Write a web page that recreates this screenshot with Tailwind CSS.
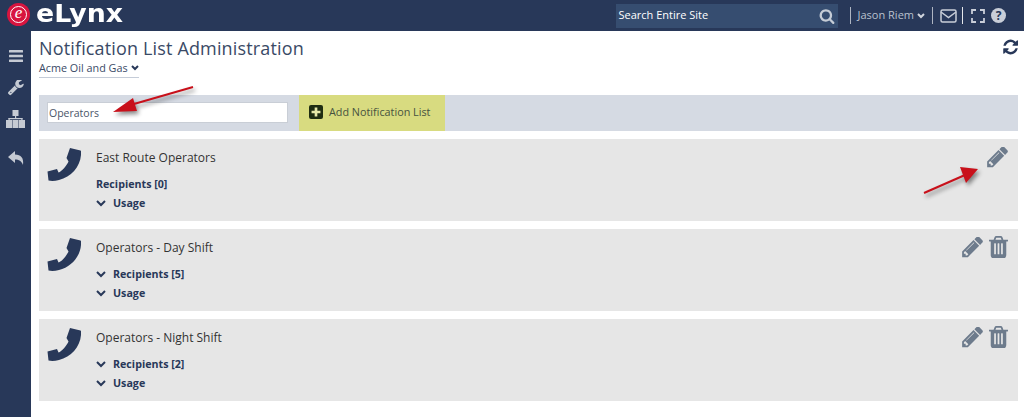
<!DOCTYPE html>
<html lang="en">
<head>
  <meta charset="UTF-8" />
  <title>Notification List Administration</title>
  <script src="https://cdn.jsdelivr.net/npm/@tailwindcss/browser@4"></script>
</head>
<body class="bg-white font-['Open_Sans',sans-serif] overflow-hidden">
  <div class="relative w-[1024px] h-[417px] overflow-hidden">

    <!-- Top bar -->
    <header class="h-[31px] bg-[#283859] flex items-center">
      <div class="ml-[7px] w-[23px] h-[23px] -mt-[3px] rounded-full bg-[#d8143f] flex items-center justify-center">
        <div class="w-[17px] h-[17px] rounded-full border border-white flex items-center justify-center text-white font-['Liberation_Serif',serif] italic text-[17px] leading-none pb-[3px]">e</div>
      </div>
      <div class="ml-[6px] -mt-[5px] text-white font-['DejaVu_Sans',sans-serif] font-bold text-[25px] leading-none origin-left scale-x-[1.07]">eLynx</div>

      <div class="ml-auto flex items-center">
        <div class="w-[222px] h-[24px] bg-[#364d70] flex items-center justify-between pl-[3px] pr-[3px] mr-[12px]">
          <span class="text-white text-[11px]">Search Entire Site</span>
          <svg class="w-[16px] h-[16px] fill-[#c5ccd6]" viewBox="0 0 1792 1792"><path d="M1216 832q0-185-131.500-316.500t-316.500-131.500-316.500 131.500-131.500 316.500 131.500 316.500 316.500 131.500 316.500-131.500 131.500-316.500zm512 832q0 52-38 90t-90 38q-54 0-90-38l-343-342q-179 124-399 124-143 0-273.500-55.500t-225-150-150-225-55.500-273.500 55.500-273.500 150-225 225-150 273.500-55.500 273.500 55.500 225 150 150 225 55.500 273.500q0 220-124 399l343 343q37 37 37 90z"/></svg>
        </div>
        <div class="w-px h-[17px] bg-[#aeb5c2]"></div>
        <span class="ml-[7px] text-[#b9c1ce] text-[11px]">Jason Riem</span>
        <svg class="ml-[3px] w-[8px] h-[6px] stroke-[#d0d5dd] fill-none stroke-2" viewBox="0 0 8 6"><path d="M1 1l3 3 3-3"/></svg>
        <div class="ml-[7px] w-px h-[17px] bg-[#aeb5c2]"></div>
        <svg class="ml-[7px] w-[17px] h-[14px] stroke-[#c9ced8] fill-none stroke-[1.5]" viewBox="0 0 17 14"><rect x="1" y="1" width="15" height="12" rx="1.500"/><path d="M1 3l7.500 5.500L16 3"/></svg>
        <div class="ml-[5px] w-px h-[17px] bg-[#e5e7eb]"></div>
        <svg class="ml-[8px] w-[14px] h-[14px] stroke-[#c9ced8] fill-none stroke-[1.8]" viewBox="0 0 14 14"><path d="M1 5V1h4M9 1h4v4M13 9v4H9M5 13H1V9"/></svg>
        <div class="ml-[6px] mr-[18px] w-[15px] h-[15px] rounded-full bg-[#c9ced8] flex items-center justify-center text-[#283859] text-[12px] font-bold leading-none">?</div>
      </div>
    </header>

    <div class="flex h-[386px]">
      <!-- Side nav -->
      <nav class="w-[31px] bg-[#283859] flex flex-col items-center pt-[19px]">
        <svg class="w-[14px] h-[12px] fill-[#c5cad3] shrink-0" viewBox="0 0 14 12"><rect width="14" height="2.600" rx=".5"/><rect y="4.700" width="14" height="2.600" rx=".5"/><rect y="9.400" width="14" height="2.600" rx=".5"/></svg>
        <svg class="w-[16px] h-[16px] mt-[18px] fill-[#c5cad3] shrink-0" viewBox="0 0 1664 1664"><path d="M363 1280q0-26-19-45t-45-19-45 19-19 45 19 45 45 19 45-19 19-45zm644-420l-682 682q-37 37-90 37-52 0-91-37l-106-108q-38-36-38-90 0-53 38-91l681-681q39 98 114.500 173.500t173.500 114.500zm634-435q0 39-23 106-47 134-164.500 217.500t-258.500 83.500q-185 0-316.500-131.500t-131.500-316.500 131.500-316.500 316.500-131.500q58 0 121.500 16.500t107.500 46.500q16 11 16 28t-16 28l-293 169v224l193 107q5-3 79-48.500t135.500-81 70.500-35.500q15 0 23.500 10t8.500 25z"/></svg>
        <svg class="w-[19px] h-[18px] mt-[14px] fill-[#c5cad3] shrink-0" viewBox="0 0 19 18"><rect x="6.500" y="0" width="6" height="6"/><rect x="9" y="6" width="1.200" height="2.500"/><rect x="2.500" y="8" width="14" height="1.200"/><rect x="2.500" y="8" width="1.200" height="2.500"/><rect x="15.300" y="8" width="1.200" height="2.500"/><rect x="0" y="10" width="6" height="8"/><rect x="6.500" y="10" width="6" height="8"/><rect x="13" y="10" width="6" height="8"/></svg>
        <svg class="w-[16px] h-[14px] mt-[23px] fill-[#c5cad3] shrink-0" viewBox="0 0 16 14"><path d="M0 6L7 0v3.500C13 3.500 16 7 15 14 13.500 10 11 8.500 7 8.500V12z"/></svg>
      </nav>

      <!-- Main -->
      <main class="flex-1 pl-[8px] pr-[6px]">
        <div class="flex justify-between h-[64px]">
          <div class="pt-[6px]">
            <h1 class="text-[#3a4a66] text-[18px] leading-[22px] tracking-[0.15px]">Notification List Administration</h1>
            <div class="mt-[1px] flex w-fit items-center border-b border-[#c5ccd8] text-[#3a4a66] text-[10.800px] leading-[16px] pb-[1px]">
              Acme Oil and Gas
              <svg class="ml-[3px] w-[8px] h-[6px] stroke-[#283859] fill-none stroke-2" viewBox="0 0 8 6"><path d="M1 1l3 3 3-3"/></svg>
            </div>
          </div>
          <svg class="w-[16px] h-[16px] mt-[8px] fill-[#283859]" viewBox="0 128 1664 1536"><path d="M1639 1056q0 5-1 7-64 268-268 434.500t-478 166.500q-146 0-282.500-55t-243.500-157l-129 129q-19 19-45 19t-45-19-19-45v-448q0-26 19-45t45-19h448q26 0 45 19t19 45-19 45l-137 137q71 66 161 102t187 36q134 0 250-65t186-179q11-17 53-117 8-23 30-23h192q13 0 22.500 9.500t9.500 22.500zm25-800v448q0 26-19 45t-45 19h-448q-26 0-45-19t-19-45 19-45l138-138q-148-137-349-137-134 0-250 65t-186 179q-11 17-53 117-8 23-30 23h-199q-13 0-22.500-9.500t-9.500-22.500v-7q65-268 270-434.500t480-166.500q146 0 284 55.500t245 156.500l130-129q19-19 45-19t45 19 19 45z"/></svg>
        </div>

        <!-- Toolbar -->
        <div class="h-[36px] bg-[#d5dae3] flex items-center pl-[8px] mb-[8px]">
          <input value="Operators" class="w-[241px] h-[21px] -mt-[1px] bg-white border border-[#c9ced6] px-[1px] text-[10.500px] text-[#4a5568] outline-none" />
          <div class="ml-[11px] w-[146px] h-[36px] bg-[#d8db80] flex items-center pl-[10px] pb-[2px] text-[#46523f] text-[10.800px]">
            <div class="w-[14px] h-[14px] rounded-[2px] bg-[#1f2d12] flex items-center justify-center mr-[6px]">
              <svg class="w-[10px] h-[10px] fill-[#e6e8a8]" viewBox="0 0 9 9"><path d="M3.300 0.500h2.400v2.800h2.800v2.400H5.700v2.800H3.300V5.700H.5V3.300h2.800z"/></svg>
            </div>
            Add Notification List
          </div>
        </div>

        <!-- Lists -->
        <div class="flex flex-col gap-[8px]">
          <section class="relative h-[82px] bg-[#e6e6e6] flex pl-[8px]">
            <svg class="w-[34px] h-[34px] mt-[8px] fill-[#283859] shrink-0" viewBox="0 0 34 34"><path d="M23 1l10.500 2.500Q34.500 4 34 8C33 20 24 30 12 33Q6 34.500 1.500 33.500L.5 24.500 10 22l1.500 3.500C15 24.500 20 18 21.500 14.500L19.500 11z"/></svg>
            <div class="ml-[15px] pt-[10px] text-[#283859]">
              <div class="text-[#333] text-[12px] leading-[18px]">East Route Operators</div>
              <div class="mt-[8px] text-[10.700px] font-bold leading-[18px]">Recipients [0]</div>
              <div class="mt-[1px] flex items-center text-[10.700px] font-bold leading-[18px]">
                <svg class="w-[10px] h-[7px] mr-[7px] stroke-[#283859] fill-none stroke-2" viewBox="0 0 10 7"><path d="M1 1l4 4 4-4"/></svg>Usage
              </div>
            </div>
            <div class="absolute right-[10px] top-[8px] flex">
              <svg class="w-[21px] h-[21px] fill-[#6d7b8c]" viewBox="0 0 1515 1536"><path d="M363 1344l91-91-235-235-91 91v107h128v128h107zm523-928q0-22-22-22-10 0-17 7l-542 542q-7 7-7 17 0 22 22 22 10 0 17-7l542-542q7-7 7-17zm-54-192l416 416-832 832h-416v-416zm683 96q0 53-37 90l-166 166-416-416 166-165q36-38 90-38 53 0 91 38l235 234q37 39 37 91z"/></svg>
            </div>
          </section>

          <section class="relative h-[82px] bg-[#e6e6e6] flex pl-[8px]">
            <svg class="w-[34px] h-[34px] mt-[8px] fill-[#283859] shrink-0" viewBox="0 0 34 34"><path d="M23 1l10.500 2.500Q34.500 4 34 8C33 20 24 30 12 33Q6 34.500 1.500 33.500L.5 24.500 10 22l1.500 3.500C15 24.500 20 18 21.500 14.500L19.500 11z"/></svg>
            <div class="ml-[15px] pt-[10px] text-[#283859]">
              <div class="text-[#333] text-[12px] leading-[18px]">Operators - Day Shift</div>
              <div class="mt-[8px] flex items-center text-[10.700px] font-bold leading-[18px]">
                <svg class="w-[10px] h-[7px] mr-[7px] stroke-[#283859] fill-none stroke-2" viewBox="0 0 10 7"><path d="M1 1l4 4 4-4"/></svg>Recipients [5]
              </div>
              <div class="mt-[1px] flex items-center text-[10.700px] font-bold leading-[18px]">
                <svg class="w-[10px] h-[7px] mr-[7px] stroke-[#283859] fill-none stroke-2" viewBox="0 0 10 7"><path d="M1 1l4 4 4-4"/></svg>Usage
              </div>
            </div>
            <div class="absolute right-[10px] top-[7px] flex items-center gap-[6px]">
              <svg class="w-[21px] h-[21px] fill-[#6d7b8c]" viewBox="0 0 1515 1536"><path d="M363 1344l91-91-235-235-91 91v107h128v128h107zm523-928q0-22-22-22-10 0-17 7l-542 542q-7 7-7 17 0 22 22 22 10 0 17-7l542-542q7-7 7-17zm-54-192l416 416-832 832h-416v-416zm683 96q0 53-37 90l-166 166-416-416 166-165q36-38 90-38 53 0 91 38l235 234q37 39 37 91z"/></svg>
              <svg class="w-[19px] h-[22px] fill-[#6d7b8c]" viewBox="0 0 1408 1536" preserveAspectRatio="none"><path d="M512 1248v-704q0-14-9-23t-23-9h-64q-14 0-23 9t-9 23v704q0 14 9 23t23 9h64q14 0 23-9t9-23zm256 0v-704q0-14-9-23t-23-9h-64q-14 0-23 9t-9 23v704q0 14 9 23t23 9h64q14 0 23-9t9-23zm256 0v-704q0-14-9-23t-23-9h-64q-14 0-23 9t-9 23v704q0 14 9 23t23 9h64q14 0 23-9t9-23zm-544-992h448l-48-117q-7-9-17-11h-317q-10 2-17 11zm928 32v64q0 14-9 23t-23 9h-96v948q0 83-47 143.500t-113 60.500h-832q-66 0-113-58.500t-47-141.500v-952h-96q-14 0-23-9t-9-23v-64q0-14 9-23t23-9h309l70-167q15-37 54-63t79-26h320q40 0 79 26t54 63l70 167h309q14 0 23 9t9 23z"/></svg>
            </div>
          </section>

          <section class="relative h-[82px] bg-[#e6e6e6] flex pl-[8px]">
            <svg class="w-[34px] h-[34px] mt-[8px] fill-[#283859] shrink-0" viewBox="0 0 34 34"><path d="M23 1l10.500 2.500Q34.500 4 34 8C33 20 24 30 12 33Q6 34.500 1.500 33.500L.5 24.500 10 22l1.500 3.500C15 24.500 20 18 21.500 14.500L19.500 11z"/></svg>
            <div class="ml-[15px] pt-[10px] text-[#283859]">
              <div class="text-[#333] text-[12px] leading-[18px]">Operators - Night Shift</div>
              <div class="mt-[8px] flex items-center text-[10.700px] font-bold leading-[18px]">
                <svg class="w-[10px] h-[7px] mr-[7px] stroke-[#283859] fill-none stroke-2" viewBox="0 0 10 7"><path d="M1 1l4 4 4-4"/></svg>Recipients [2]
              </div>
              <div class="mt-[1px] flex items-center text-[10.700px] font-bold leading-[18px]">
                <svg class="w-[10px] h-[7px] mr-[7px] stroke-[#283859] fill-none stroke-2" viewBox="0 0 10 7"><path d="M1 1l4 4 4-4"/></svg>Usage
              </div>
            </div>
            <div class="absolute right-[10px] top-[7px] flex items-center gap-[6px]">
              <svg class="w-[21px] h-[21px] fill-[#6d7b8c]" viewBox="0 0 1515 1536"><path d="M363 1344l91-91-235-235-91 91v107h128v128h107zm523-928q0-22-22-22-10 0-17 7l-542 542q-7 7-7 17 0 22 22 22 10 0 17-7l542-542q7-7 7-17zm-54-192l416 416-832 832h-416v-416zm683 96q0 53-37 90l-166 166-416-416 166-165q36-38 90-38 53 0 91 38l235 234q37 39 37 91z"/></svg>
              <svg class="w-[19px] h-[22px] fill-[#6d7b8c]" viewBox="0 0 1408 1536" preserveAspectRatio="none"><path d="M512 1248v-704q0-14-9-23t-23-9h-64q-14 0-23 9t-9 23v704q0 14 9 23t23 9h64q14 0 23-9t9-23zm256 0v-704q0-14-9-23t-23-9h-64q-14 0-23 9t-9 23v704q0 14 9 23t23 9h64q14 0 23-9t9-23zm256 0v-704q0-14-9-23t-23-9h-64q-14 0-23 9t-9 23v704q0 14 9 23t23 9h64q14 0 23-9t9-23zm-544-992h448l-48-117q-7-9-17-11h-317q-10 2-17 11zm928 32v64q0 14-9 23t-23 9h-96v948q0 83-47 143.500t-113 60.500h-832q-66 0-113-58.500t-47-141.500v-952h-96q-14 0-23-9t-9-23v-64q0-14 9-23t23-9h309l70-167q15-37 54-63t79-26h320q40 0 79 26t54 63l70 167h309q14 0 23 9t9 23z"/></svg>
            </div>
          </section>
        </div>
      </main>
    </div>

    <!-- Annotation arrows -->
    <svg class="absolute left-[105px] top-[80px] w-[100px] h-[45px] drop-shadow-[2px_3px_2px_rgba(0,0,0,0.45)]" viewBox="0 0 100 45"><path d="M88 7L22 26" stroke="#c8101a" stroke-width="2" fill="none"/><path d="M8 32l20-14 4 13z" fill="#c8101a"/></svg>
    <svg class="absolute left-[915px] top-[160px] w-[70px] h-[40px] drop-shadow-[2px_3px_2px_rgba(0,0,0,0.45)]" viewBox="0 0 70 40"><path d="M9 33L50 15" stroke="#c8101a" stroke-width="2" fill="none"/><path d="M63 9L45 7l6 16z" fill="#c8101a"/></svg>
  </div>
</body>
</html>
